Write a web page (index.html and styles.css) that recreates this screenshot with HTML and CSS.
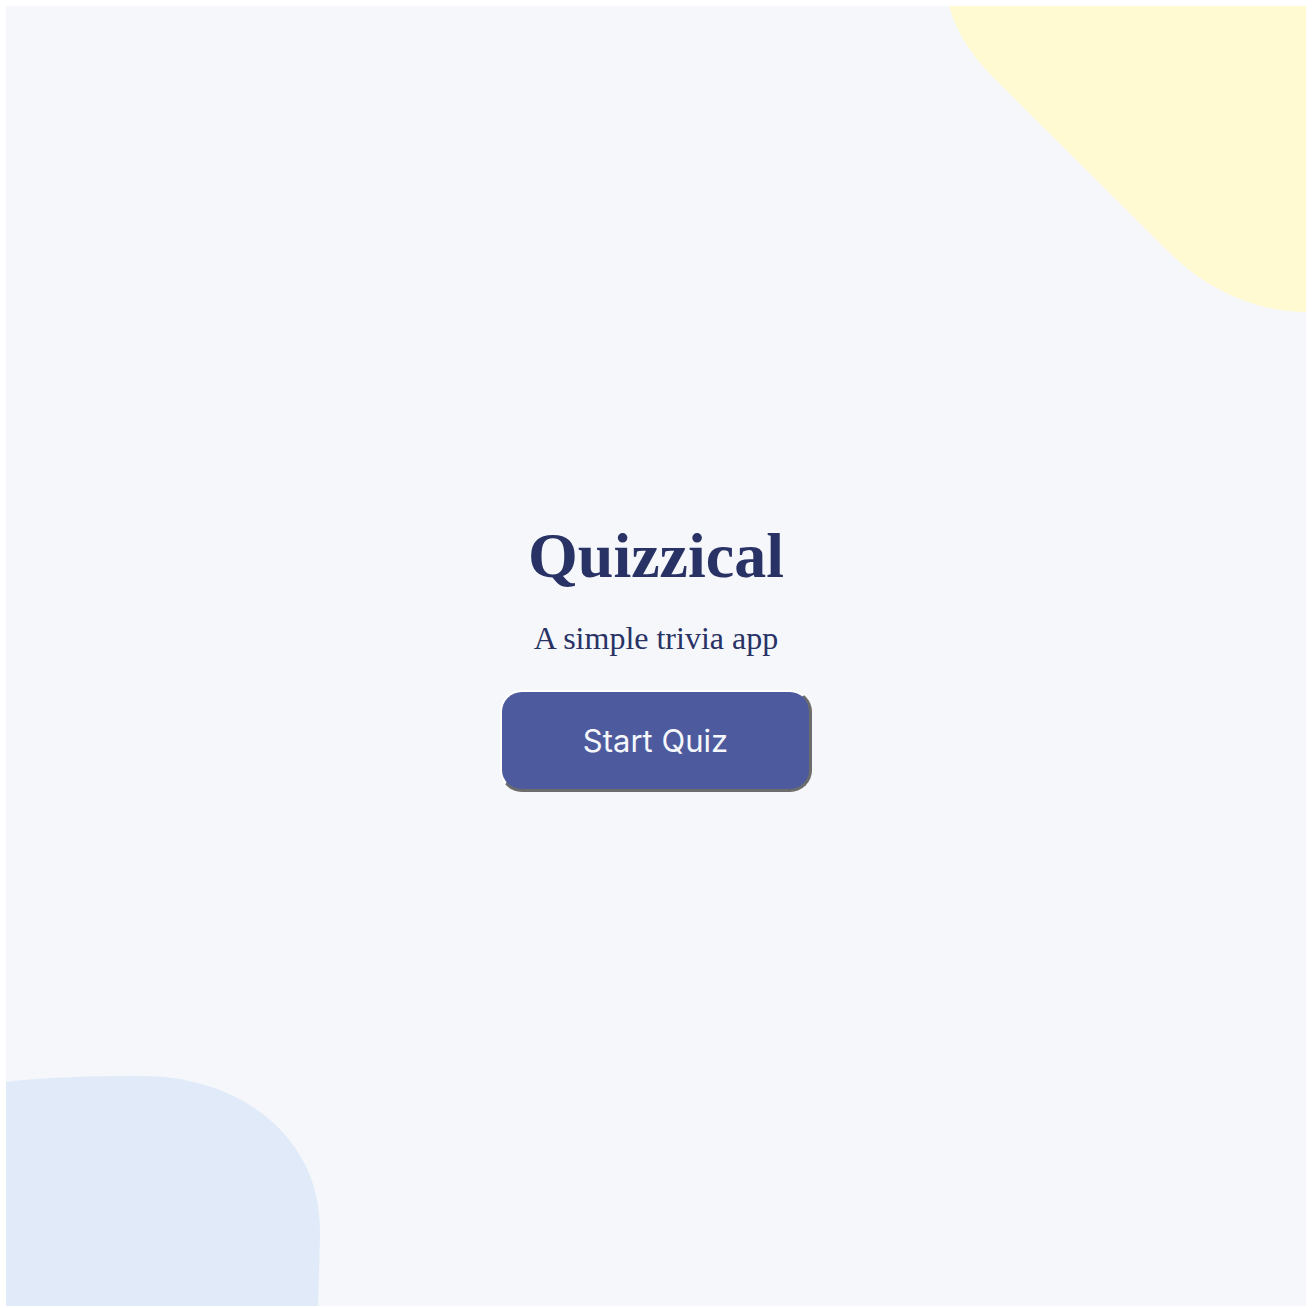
FILE: index.html
```html
<!DOCTYPE html>
<html lang="en">
<head>
<meta charset="utf-8">
<title>Quizzical</title>
<link rel="stylesheet" href="styles.css">
</head>
<body>
<main class="app">
  <svg class="blob blob-yellow" viewBox="0 0 1300 1300" width="1300" height="1300" aria-hidden="true">
    <path d="M943,0 C950,25 965,50 992,76 L1164,247 C1200,283 1250,306 1300,306 L1300,0 Z" fill="#fffad1"/>
  </svg>
  <svg class="blob blob-blue" viewBox="0 0 1300 1300" width="1300" height="1300" aria-hidden="true">
    <path d="M0,1076 C40,1071 90,1070 134,1070 C200,1070 250,1095 280,1130 C305,1160 314,1190 314,1230 L312,1300 L0,1300 Z" fill="#dee9f8" fill-opacity="0.95"/>
  </svg>
  <section class="intro">
    <h1 class="title">Quizzical</h1>
    <p class="subtitle">A simple trivia app</p>
    <button class="start-btn" type="button">Start Quiz</button>
  </section>
</main>
</body>
</html>
```
FILE: styles.css
```css
html, body {
  margin: 0;
  padding: 0;
  background: #ffffff;
}

body {
  padding: 6px;
}

.app {
  position: relative;
  width: 1300px;
  height: 1300px;
  background: #f5f7fb;
  overflow: hidden;
  display: flex;
  align-items: center;
  justify-content: center;
}

.blob {
  position: absolute;
  left: 0;
  top: 0;
}

.intro {
  position: relative;
  display: flex;
  flex-direction: column;
  align-items: center;
  color: #293264;
}

.title {
  margin: 0;
  font-family: "Liberation Serif", "Times New Roman", serif;
  font-weight: 700;
  font-size: 64px;
  line-height: 72px;
}

.subtitle {
  margin: 26px 0 0;
  font-family: "Liberation Serif", "Times New Roman", serif;
  font-size: 32px;
  line-height: 40px;
}

.start-btn {
  margin-top: 32px;
  width: 312px;
  height: 102px;
  box-sizing: border-box;
  background: #4d5b9e;
  color: #f5f7fb;
  font-family: Inter, "Noto Sans", sans-serif;
  font-size: 31px;
  font-weight: 400;
  border-style: solid;
  border-width: 2px 3px 3px 2px;
  border-color: #ffffff #6c6c6c #6c6c6c #ffffff;
  border-radius: 22px;
  cursor: pointer;
}
```
